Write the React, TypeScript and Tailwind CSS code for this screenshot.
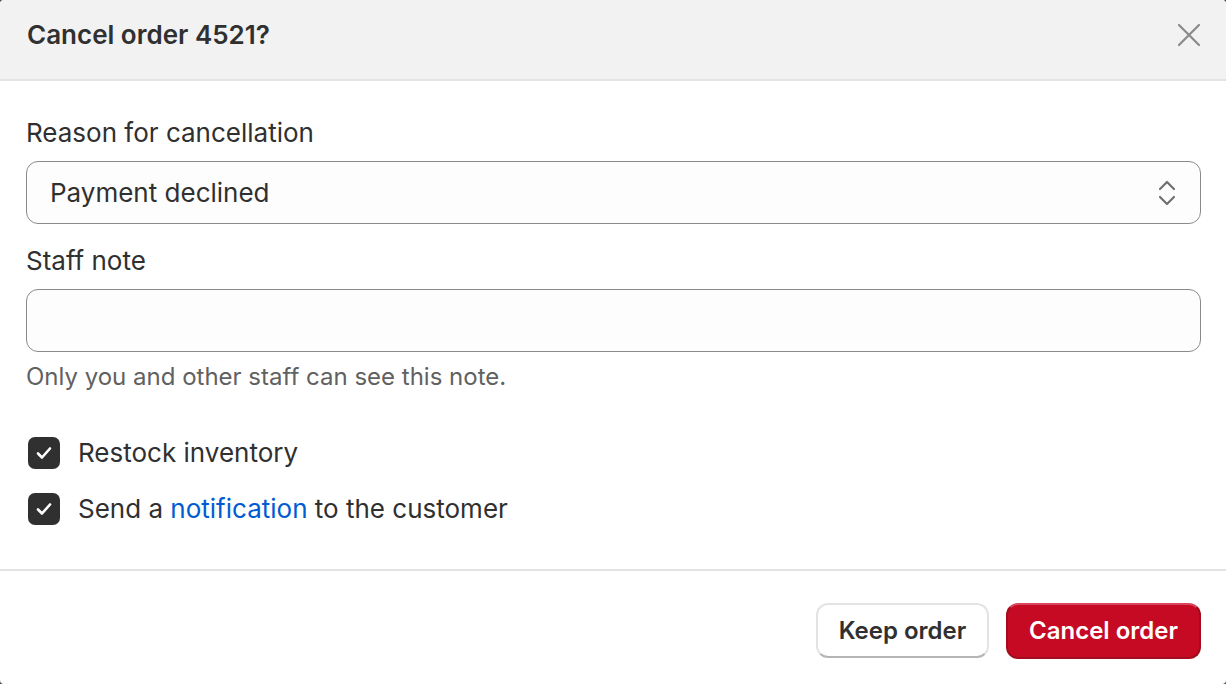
import { useState } from 'react';

export default function App() {
  const [restock, setRestock] = useState(true);
  const [notify, setNotify] = useState(true);

  return (
    <div className="h-[684px] w-[1226px] bg-[#4a4a4a]" style={{ fontFamily: 'Inter, "Noto Sans", sans-serif' }}>
      <div className="flex h-full w-full flex-col overflow-hidden rounded-[4px] bg-white text-[#303030]">
        {/* Header */}
        <div className="flex h-[81px] items-start justify-between border-b-2 border-[#e3e3e3] bg-[#f2f2f2] pl-[27px] pr-[21px] pt-[17px]">
          <h2 className="text-[26px] font-semibold leading-[36px]">Cancel order 4521?</h2>
          <button className="mt-[2px] flex h-[32px] w-[32px] items-center justify-center text-[#8a8a8a]">
            <svg width="24" height="24" viewBox="0 0 24 24" fill="none" stroke="currentColor" strokeWidth="2.2" strokeLinecap="round">
              <path d="M2 2l20 20M22 2L2 22" />
            </svg>
          </button>
        </div>

        {/* Body */}
        <div className="flex flex-col pl-[26px] pr-[25px] pt-[36px]">
          <label className="text-[26px] leading-[32px]">Reason for cancellation</label>
          <div className="mt-[12px] flex h-[63px] items-center justify-between rounded-[12px] border-[1.5px] border-[#8a8a8a] bg-[#fdfdfd] pl-[23px] pr-[24px]">
            <span className="text-[26px]">Payment declined</span>
            <svg width="18" height="26" viewBox="0 0 18 26" fill="none" stroke="#707070" strokeWidth="2.2" strokeLinecap="round" strokeLinejoin="round">
              <path d="M2 9l7-7 7 7M2 17l7 7 7-7" />
            </svg>
          </div>

          <label className="mt-[21px] text-[26px] leading-[32px]">Staff note</label>
          <div className="mt-[12px] h-[63px] rounded-[12px] border-[1.5px] border-[#8a8a8a] bg-[#fdfdfd]" />
          <p className="mt-[11px] text-[24px] leading-[28px] text-[#616161]">Only you and other staff can see this note.</p>

          <div className="mt-[46px] flex flex-col gap-[24px] pl-[2px]">
            <label className="flex cursor-pointer items-center gap-[18px]" onClick={() => setRestock(!restock)}>
              <Check on={restock} />
              <span className="text-[26px] leading-[32px]">Restock inventory</span>
            </label>
            <label className="flex cursor-pointer items-center gap-[18px]" onClick={() => setNotify(!notify)}>
              <Check on={notify} />
              <span className="text-[26px] leading-[32px]">
                Send a <a className="text-[#005bd3]">notification</a> to the customer
              </span>
            </label>
          </div>
        </div>

        {/* Footer */}
        <div className="mt-[44px] flex flex-1 items-start justify-end gap-[17px] border-t-2 border-[#e3e3e3] pr-[25px] pt-[32px]">
          <button className="flex h-[55px] w-[173px] items-center justify-center rounded-[12px] border-2 border-[#e3e3e3] border-b-[#b5b5b5] bg-white text-[24px] font-semibold text-[#303030]">
            Keep order
          </button>
          <button className="flex h-[56px] w-[195px] items-center justify-center rounded-[12px] border-2 border-[#a30b1e] border-t-[#d8485a] bg-[#c70a24] text-[24px] font-semibold text-white">
            Cancel order
          </button>
        </div>
      </div>
    </div>
  );
}

function Check({ on }: { on: boolean }) {
  return (
    <span
      className={`flex h-[32px] w-[32px] shrink-0 items-center justify-center rounded-[7px] ${on ? 'bg-[#303030]' : 'border-2 border-[#8a8a8a] bg-white'}`}
    >
      {on && (
        <svg width="16" height="14" viewBox="0 0 16 14" fill="none" stroke="white" strokeWidth="2.6" strokeLinecap="round" strokeLinejoin="round">
          <path d="M2 7.5l4 4 8-9" />
        </svg>
      )}
    </span>
  );
}
